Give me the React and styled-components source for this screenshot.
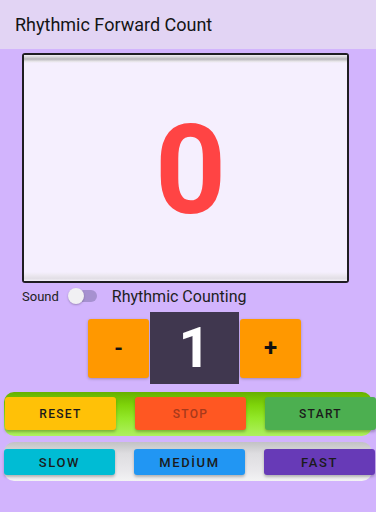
import React, { useState } from "react";
import styled, { createGlobalStyle } from "styled-components";

const GlobalStyle = createGlobalStyle`
  html, body {
    margin: 0;
    padding: 0;
    background: #d2b4fd;
    font-family: Roboto, "Liberation Sans", sans-serif;
  }
`;

const Screen = styled.div`
  width: 376px;
  height: 512px;
  background: #d2b4fd;
  display: flex;
  flex-direction: column;
  overflow: hidden;
`;

const Header = styled.header`
  height: 49px;
  background: #e2d4f4;
  display: flex;
  align-items: center;
  padding-left: 15px;
  font-size: 18px;
  font-weight: 400;
  color: #141414;
  flex-shrink: 0;
`;

const Display = styled.div`
  margin: 4px 0 0 22px;
  width: 323px;
  height: 226px;
  border: 2px solid #1f1d22;
  border-radius: 3px;
  background: #f5effe;
  display: flex;
  flex-direction: column;
  box-sizing: content-box;
`;

const Edge = styled.div`
  height: ${(p) => (p.$top ? 8 : 9)}px;
  background: ${(p) =>
    p.$top
      ? "linear-gradient(#f2f0f4 0%, #d2d0d4 30%, #b8b6ba 50%, #e6e4e8 80%, #f5effe 100%)"
      : "linear-gradient(#f5effe 0%, #ebe7ef 40%, #e2dee6 70%, #f2eff5 100%)"};
`;

const Body = styled.div`
  flex: 1;
  display: flex;
  align-items: center;
  justify-content: center;
  padding: 6px 0 0 10px;
`;

const BigNumber = styled.span`
  font-size: 124px;
  font-weight: 700;
  color: #ff4444;
  line-height: 1;
`;

const SoundRow = styled.div`
  display: flex;
  align-items: center;
  height: 24px;
  margin-top: 1px;
  padding-left: 22px;
`;

const SmallLabel = styled.span`
  font-size: 13px;
  color: #222;
`;

const Switch = styled.div`
  margin-left: 9px;
  width: 29px;
  height: 16px;
  display: flex;
  align-items: center;
  position: relative;
`;

const Track = styled.div`
  width: 26px;
  height: 12px;
  border-radius: 6px;
  background: #a691d0;
  margin-left: 3px;
`;

const Thumb = styled.div`
  position: absolute;
  left: 0;
  top: 0;
  width: 16px;
  height: 16px;
  border-radius: 50%;
  background: #f1f0f3;
  box-shadow: 0 1px 2px rgba(0, 0, 0, 0.25);
`;

const ModeLabel = styled.span`
  margin-left: 15px;
  font-size: 16px;
  color: #1e1e1e;
`;

const CounterRow = styled.div`
  display: flex;
  align-items: center;
  padding-left: 88px;
  margin-top: 4px;
  height: 72px;
`;

const StepButton = styled.button`
  width: 61px;
  height: 59px;
  border: none;
  border-radius: 3px;
  background: #ff9800;
  font-family: inherit;
  font-weight: 700;
  font-size: ${(p) => p.$size}px;
  color: #111;
  box-shadow: 0 1px 3px rgba(0, 0, 0, 0.25);
  padding: 0;
`;

const Step = styled.div`
  width: 89px;
  height: 72px;
  margin: 0 1px;
  background: #40374f;
  display: flex;
  align-items: center;
  justify-content: center;
  color: #fff;
  font-size: 56px;
  font-weight: 700;
`;

const Band = styled.div`
  margin: ${(p) => p.$mt}px 4px 0 4px;
  padding: ${(p) => p.$pad};
  border-radius: 10px;
  background: ${(p) => p.$bg};
  display: grid;
  grid-template-columns: repeat(3, 111px);
  column-gap: 19px;
`;

const ActionButton = styled.button`
  height: ${(p) => p.$h}px;
  border: none;
  border-radius: 3px;
  background: ${(p) => p.$bg};
  color: ${(p) => p.$fg || "#1b1b1b"};
  font-family: inherit;
  font-weight: 500;
  font-size: ${(p) => p.$fs}px;
  letter-spacing: ${(p) => p.$ls}px;
  box-shadow: 0 2px 3px rgba(0, 0, 0, 0.25);
  padding: 0;
`;

const greenBand =
  "linear-gradient(#66b000 0%, #7fd40a 30%, #93e82a 60%, #aef060 100%)";
const greyBand =
  "linear-gradient(#c2c2c4 0%, #dedde0 30%, #e8e7ea 70%, #f3f3f4 100%)";

export default function App() {
  const [count] = useState(0);
  const [step] = useState(1);

  return (
    <Screen>
      <GlobalStyle />
      <Header>Rhythmic Forward Count</Header>

      <Display>
        <Edge $top />
        <Body>
          <BigNumber>{count}</BigNumber>
        </Body>
        <Edge />
      </Display>

      <SoundRow>
        <SmallLabel>Sound</SmallLabel>
        <Switch>
          <Track />
          <Thumb />
        </Switch>
        <ModeLabel>Rhythmic Counting</ModeLabel>
      </SoundRow>

      <CounterRow>
        <StepButton $size={22}>-</StepButton>
        <Step>{step}</Step>
        <StepButton $size={24}>+</StepButton>
      </CounterRow>

      <Band $mt={8} $pad="5px 0 6px 1px" $bg={greenBand}>
        <ActionButton $h={33} $bg="#ffc107" $fs={12} $ls={1.3}>RESET</ActionButton>
        <ActionButton $h={33} $bg="#ff5722" $fg="#a8391b" $fs={12} $ls={1.3}>STOP</ActionButton>
        <ActionButton $h={33} $bg="#4caf50" $fs={12} $ls={1.3}>START</ActionButton>
      </Band>

      <Band $mt={6} $pad="7px 0 6px 0" $bg={greyBand}>
        <ActionButton $h={26} $bg="#00bcd4" $fs={13} $ls={1.6}>SLOW</ActionButton>
        <ActionButton $h={26} $bg="#2196f3" $fs={13} $ls={1.6}>MEDİUM</ActionButton>
        <ActionButton $h={26} $bg="#673ab7" $fs={13} $ls={1.6}>FAST</ActionButton>
      </Band>
    </Screen>
  );
}
